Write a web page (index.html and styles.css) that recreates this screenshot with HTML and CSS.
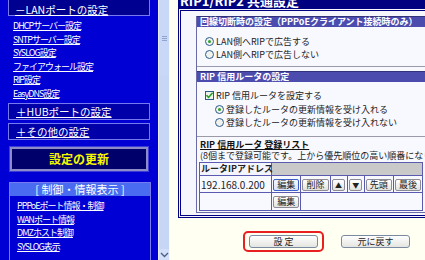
FILE: index.html
```html
<!DOCTYPE html>
<html lang="ja">

<head>
    <meta charset="UTF-8">
    <title>RIP1/RIP2 共通設定</title>
    <link rel="stylesheet" href="styles.css">
</head>

<body>
    <div class="screen">
        <div class="nav">
            <div class="navbox lan"><a href="#">－LANポートの設定</a></div>
            <ul class="links">
                <li><a href="#">DHCPサーバー設定</a></li>
                <li><a href="#">SNTPサーバー設定</a></li>
                <li><a href="#">SYSLOG設定</a></li>
                <li><a href="#">ファイアウォール設定</a></li>
                <li><a href="#">RIP設定</a></li>
                <li><a href="#">EasyDNS設定</a></li>
            </ul>
            <div class="navbox"><a href="#">＋HUBポートの設定</a></div>
            <div class="navbox"><a href="#">＋その他の設定</a></div>
            <div class="update">設定の更新</div>
            <div class="infobox">
                <div class="infohead">[ 制御・情報表示 ]</div>
                <ul class="links">
                    <li><a href="#">PPPoEポート情報・制御</a></li>
                    <li><a href="#">WANポート情報</a></li>
                    <li><a href="#">DMZホスト制御</a></li>
                    <li><a href="#">SYSLOG表示</a></li>
                </ul>
            </div>
        </div>

        <div class="scrollbar">
            <div class="thumb"><span class="grip"></span></div>
            <div class="down">
                <svg width="9" height="6" viewBox="0 0 9 6"><path d="M1 1 L4.5 4.5 L8 1" fill="none" stroke="#4d6185" stroke-width="1.4"/></svg>
            </div>
        </div>

        <div class="main">
            <div class="panel">
                <div class="title">RIP1/RIP2 共通設定</div>
                <div class="pbody">
                    <div class="sections">
                        <div class="sec first">
                            <div class="sechead">回線切断時の設定（PPPoEクライアント接続時のみ）</div>
                            <div class="secbody s1">
                                <div class="opt"><span class="radio on"></span>LAN側へRIPで広告する</div>
                                <div class="opt"><span class="radio"></span>LAN側へRIPで広告しない</div>
                            </div>
                        </div>
                        <div class="sec second">
                            <div class="sechead">RIP 信用ルータの設定</div>
                            <div class="secbody s2">
                                <div class="opt">
                                    <span class="check">
                                        <svg width="9" height="9" viewBox="0 0 9 9"><path d="M1.5 4.2 L3.6 6.4 L7.6 1.8" fill="none" stroke="#21a121" stroke-width="1.6"/></svg>
                                    </span>RIP 信用ルータを設定する
                                </div>
                                <div class="opt sub"><span class="radio on"></span>登録したルータの更新情報を受け入れる</div>
                                <div class="opt sub last"><span class="radio"></span>登録したルータの更新情報を受け入れない</div>
                            </div>
                        </div>
                        <div class="sec third">
                            <div class="listtitle">RIP 信用ルータ 登録リスト</div>
                            <div class="note">(8個まで登録可能です。上から優先順位の高い順番になります)</div>
                            <table class="routers">
                                <colgroup>
                                    <col class="c-ip">
                                    <col class="c-btn">
                                    <col class="c-btn">
                                    <col class="c-arrow">
                                    <col class="c-arrow">
                                    <col class="c-btn">
                                    <col class="c-btn">
                                </colgroup>
                                <tr class="head">
                                    <th>ルータIPアドレス</th>
                                    <th class="hatch" colspan="6"></th>
                                </tr>
                                <tr class="row1">
                                    <td class="ip">192.168.0.200</td>
                                    <td><button class="btn focus">編集</button></td>
                                    <td><button class="btn">削除</button></td>
                                    <td><button class="btn arrow">▲</button></td>
                                    <td><button class="btn arrow">▼</button></td>
                                    <td><button class="btn">先頭</button></td>
                                    <td><button class="btn">最後</button></td>
                                </tr>
                                <tr class="row2">
                                    <td></td>
                                    <td><button class="btn">編集</button></td>
                                    <td colspan="5"></td>
                                </tr>
                            </table>
                        </div>
                    </div>
                </div>
            </div>

            <div class="actions">
                <span class="ring"><button class="big">設 定</button></span>
                <button class="big">元に戻す</button>
            </div>
        </div>
    </div>
</body>

</html>
```

FILE: styles.css
```css
body {
    margin: 0;
    width: 425px;
    height: 260px;
    overflow: hidden;
    font-family: "Noto Sans CJK JP", sans-serif;
}

.screen {
    display: flex;
    height: 260px;
}

/* left menu */
.nav {
    width: 158px;
    flex: none;
    box-sizing: border-box;
    padding-left: 8px;
    background-color: #0000d4;
    overflow: hidden;
}

.nav a {
    color: #ffffff;
    text-decoration: underline;
}

.navbox {
    width: 142px;
    height: 17px;
    box-sizing: border-box;
    margin-top: 3px;
    padding-left: 7px;
    border: 1px solid #7878f0;
    background-color: #0000a8;
    font-size: 10.5px;
    line-height: 15px;
}

.navbox.lan {
    height: 22px;
    margin-top: -6px;
    padding-top: 9px;
    padding-left: 6px;
    line-height: 12px;
    background-color: #000090;
}

.links {
    list-style: none;
    margin: 3px 0 1px;
    padding: 0 0 0 5px;
    font-size: 9px;
    letter-spacing: -1px;
    line-height: 13.5px;
}

.update {
    width: 138px;
    height: 24px;
    box-sizing: border-box;
    margin: 7px 0 0 2px;
    border: 2px solid #8c8cc8;
    outline: 1px solid #3c3cd8;
    background-color: #00006a;
    color: #f6f600;
    font-size: 12px;
    font-weight: bold;
    line-height: 20px;
    text-align: center;
}

.infobox {
    width: 142px;
    height: 90px;
    box-sizing: border-box;
    margin: 11px 0 0 1px;
    border: 1px solid #7878f0;
}

.infohead {
    height: 13px;
    background-color: #4a6cf0;
    color: #ffffff;
    font-size: 11px;
    line-height: 13px;
    text-align: center;
}

.infobox .links {
    margin-top: 3px;
    padding-left: 7px;
}

/* scrollbar */
.scrollbar {
    width: 12px;
    flex: none;
    box-sizing: border-box;
    display: flex;
    flex-direction: column;
    justify-content: space-between;
    border-left: 1px solid #e4ecfc;
    border-right: 1px solid #f4f8ff;
    background-color: #c8d6f6;
}

.thumb {
    height: 76px;
    display: flex;
    align-items: center;
    justify-content: center;
    background-color: #cad8f8;
}

.grip {
    width: 5px;
    height: 5px;
    background: repeating-linear-gradient(#8fa4d0 0 1px, transparent 1px 2px);
}

.down {
    height: 11px;
    display: flex;
    align-items: center;
    justify-content: center;
    border-radius: 2px;
    background-color: #d4e0fa;
}

/* main area */
.main {
    flex: 1;
    min-width: 0;
    padding-left: 8px;
    background-color: #fffff2;
}

.panel {
    width: 300px;
}

.title {
    height: 20px;
    box-sizing: border-box;
    margin-top: -12px;
    padding: 6px 0 0 2px;
    background-color: #000080;
    color: #ffffff;
    font-size: 13px;
    font-weight: bold;
    line-height: 14px;
    overflow: hidden;
}

.pbody {
    border: 3px double #000080;
    border-right: none;
    padding: 5px 0 2px 15px;
    background-color: #f6f6fd;
}

.sections {
    border-left: 1px solid #6a6aa8;
    border-bottom: 1px solid #6a6aa8;
    background-color: #f8f8ff;
    font-size: 9px;
    color: #222222;
    white-space: nowrap;
}

.sechead {
    height: 10px;
    border-top: 1px solid #33337a;
    padding-left: 3px;
    background-color: #4c4cae;
    color: #ffffff;
    font-weight: bold;
    line-height: 10px;
}

.secbody {
    border-bottom: 1px solid #9a9aaa;
}

.s1 {
    height: 31px;
    padding: 8px 0 0 8px;
}

.second {
    margin-top: 4px;
}

.s2 {
    height: 48px;
    padding: 6px 0 0 8px;
}

.opt {
    display: flex;
    align-items: center;
    gap: 2px;
    height: 13px;
}

.s2 .opt {
    height: 14px;
}

.s2 .opt.last {
    height: 13px;
}

.opt.sub {
    padding-left: 10px;
}

.radio {
    width: 9px;
    height: 9px;
    box-sizing: border-box;
    border: 1px solid #2c5a8c;
    border-radius: 50%;
    background-color: #f2f2ec;
    display: flex;
    align-items: center;
    justify-content: center;
}

.radio.on::after {
    content: "";
    width: 3px;
    height: 3px;
    border-radius: 50%;
    background-color: #2ea02e;
}

.check {
    width: 9px;
    height: 9px;
    box-sizing: border-box;
    border: 1px solid #2c5a8c;
    background-color: #f2f2ec;
    display: flex;
}

.check svg {
    margin: -1px;
}

.third {
    padding: 2px 0 0 3px;
}

.listtitle {
    font-weight: bold;
    line-height: 11px;
    text-decoration: underline;
    color: #111111;
}

.note {
    line-height: 11px;
}

.routers {
    width: 224px;
    margin: 1px 0 1px -1px;
    border-collapse: collapse;
    border: 1px solid #3a3a98;
    table-layout: fixed;
}

.c-ip { width: 72px; }
.c-btn { width: 29px; }
.c-arrow { width: 17px; }

.routers th,
.routers td {
    border: 1px solid #5a5ab0;
    padding: 0;
}

.routers .head th {
    height: 12px;
    text-align: left;
    padding-left: 1px;
    font-weight: bold;
    line-height: 12px;
    background-color: #f4f4fc;
}

.routers .head th.hatch {
    background: repeating-conic-gradient(#bcbcbc 0 25%, #d6d6d6 0 50%) 0 0 / 2px 2px;
}

.routers td {
    text-align: center;
    background-color: #f8f8ff;
}

.row1 td {
    height: 16px;
}

.row2 td {
    height: 17px;
}

.routers td.ip {
    text-align: left;
    padding-left: 1px;
    font-size: 10px;
}

.btn {
    height: 12px;
    padding: 0 3px;
    border: 1px solid #8c8c98;
    border-radius: 2px;
    background: linear-gradient(#ffffff, #e2e2dc);
    font-family: "Noto Sans CJK JP", sans-serif;
    font-size: 9px;
    line-height: 10px;
    color: #222222;
    cursor: pointer;
}

.btn.focus {
    border-color: #3a5ec8;
    background: linear-gradient(#f4f8ff, #d8e2f6);
}

.btn.arrow {
    padding: 0 2px;
    font-size: 7px;
}

/* bottom buttons */
.actions {
    display: flex;
    align-items: center;
    gap: 17px;
    margin-top: 13px;
    padding-left: 65px;
}

.ring {
    padding: 2px 4px;
    border: 2px solid #e82020;
    border-radius: 5px;
}

.big {
    display: block;
    width: 69px;
    height: 13px;
    padding: 0;
    border: 1px solid #7a8aa0;
    border-radius: 3px;
    background: linear-gradient(#ffffff, #e4e4e0);
    font-family: "Noto Sans CJK JP", sans-serif;
    font-size: 9px;
    line-height: 11px;
    color: #222222;
    cursor: pointer;
}
```
